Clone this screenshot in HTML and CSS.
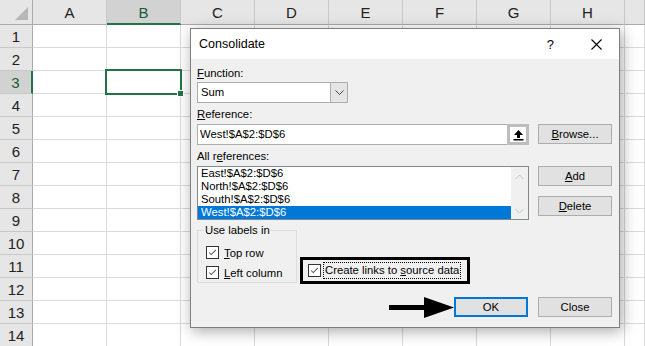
FILE: index.html
```html
<!DOCTYPE html>
<html lang="en">
<head>
  <meta charset="UTF-8">
  <title>Consolidate</title>
  <link rel="stylesheet" href="styles.css">
</head>
<body>
  <div class="sheet" id="sheet">
    <!-- grid cells are generated below -->
  </div>

  <div class="dialog">
    <div class="title-bar">
      <span class="title">Consolidate</span>
      <span class="help">?</span>
      <svg class="close-x" width="11" height="11" viewBox="0 0 11 11">
        <path d="M0.5 0.5 L10.5 10.5 M10.5 0.5 L0.5 10.5" stroke="#000" stroke-width="1.1" fill="none"/>
      </svg>
    </div>

    <div class="dlg-body">
      <div class="label first"><u>F</u>unction:</div>
      <div class="combo">
        <span class="combo-text">Sum</span>
        <span class="combo-btn">
          <svg width="9" height="6" viewBox="0 0 9 6"><path d="M0.5 0.5 L4.5 4.5 L8.5 0.5" stroke="#444" fill="none"/></svg>
        </span>
      </div>

      <div class="label"><u>R</u>eference:</div>
      <div class="row">
        <div class="ref-field">
          <div class="ref-input">West!$A$2:$D$6</div>
          <div class="collapse-btn">
            <svg width="11" height="12" viewBox="0 0 11 12">
              <path d="M5.5 1 L1 6 L4 6 L4 9 L7 9 L7 6 L10 6 Z" fill="#000"/>
              <rect x="0.5" y="10" width="10" height="1.5" fill="#000"/>
            </svg>
          </div>
        </div>
        <div class="btn"><u>B</u>rowse...</div>
      </div>

      <div class="label">All r<u>e</u>ferences:</div>
      <div class="row">
        <div class="listbox">
          <div class="items">
            <div class="item">East!$A$2:$D$6</div>
            <div class="item">North!$A$2:$D$6</div>
            <div class="item">South!$A$2:$D$6</div>
            <div class="item selected">West!$A$2:$D$6</div>
          </div>
          <div class="scrollbar">
            <svg width="9" height="6" viewBox="0 0 9 6"><path d="M0.5 5 L4.5 1 L8.5 5" stroke="#c2c2c2" fill="none"/></svg>
            <svg width="9" height="6" viewBox="0 0 9 6"><path d="M0.5 1 L4.5 5 L8.5 1" stroke="#c2c2c2" fill="none"/></svg>
          </div>
        </div>
        <div class="btn-col">
          <div class="btn"><u>A</u>dd</div>
          <div class="btn"><u>D</u>elete</div>
        </div>
      </div>

      <div class="options">
        <fieldset class="group">
          <legend>Use labels in</legend>
          <div class="check-line">
            <svg class="box" width="13" height="13" viewBox="0 0 13 13"><path d="M2.5 6.5 L5 9 L10.5 3.5" stroke="#555" stroke-width="1.2" fill="none"/></svg>
            <span><u>T</u>op row</span>
          </div>
          <div class="check-line">
            <svg class="box" width="13" height="13" viewBox="0 0 13 13"><path d="M2.5 6.5 L5 9 L10.5 3.5" stroke="#555" stroke-width="1.2" fill="none"/></svg>
            <span><u>L</u>eft column</span>
          </div>
        </fieldset>
        <div class="highlight">
          <svg class="box" width="13" height="13" viewBox="0 0 13 13"><path d="M2.5 6.5 L5 9 L10.5 3.5" stroke="#555" stroke-width="1.2" fill="none"/></svg>
          <span class="focus">Create links to <u>s</u>ource data</span>
        </div>
      </div>

      <div class="actions">
        <div class="btn default">OK</div>
        <div class="btn">Close</div>
      </div>
    </div>
  </div>

  <svg class="pointer" width="66" height="22" viewBox="0 0 66 22">
    <rect x="0" y="8" width="38" height="5" fill="#000"/>
    <path d="M35 0 L65 10.5 L35 21 Z" fill="#000"/>
  </svg>

  <script>
    const sheet = document.getElementById("sheet");
    const cols = ["A", "B", "C", "D", "E", "F", "G", "H", ""];
    let html = '<div class="corner"></div>';
    cols.forEach(c => {
      html += `<div class="col-head ${c === "B" ? "active" : ""}">${c}</div>`;
    });
    for (let r = 1; r <= 14; r++) {
      html += `<div class="row-head ${r === 3 ? "active" : ""}">${r}</div>`;
      cols.forEach(c => {
        const sel = (r === 3 && c === "B") ? "selected" : "";
        html += `<div class="cell ${sel}"></div>`;
      });
    }
    sheet.innerHTML = html;
  </script>
</body>
</html>
```

FILE: styles.css
```css
body {
  margin: 0;
  width: 645px;
  height: 346px;
  overflow: hidden;
  background-color: #fff;
  position: relative;
}

/* spreadsheet */
.sheet {
  display: grid;
  grid-template-columns: 33px repeat(8, 74px) 20px;
  grid-template-rows: 25px;
  grid-auto-rows: 23px;
  font-family: "Liberation Sans", Arial, sans-serif;
  font-size: 15px;
  color: #222;
}

.corner,
.col-head,
.row-head {
  background-color: #e6e6e6;
  box-sizing: border-box;
  display: flex;
  align-items: center;
  justify-content: center;
}

.corner {
  position: relative;
  border-right: 1px solid #ababab;
  border-bottom: 1px solid #ababab;
}

.corner::after {
  content: "";
  position: absolute;
  right: 4px;
  bottom: 4px;
  border-left: 13px solid transparent;
  border-bottom: 13px solid #b7b7b7;
}

.col-head {
  border-right: 1px solid #c8c8c8;
  border-bottom: 1px solid #ababab;
  padding-top: 1px;
}

.col-head.active {
  background-color: #d2d2d2;
  color: #185c37;
  border-bottom: 2px solid #217346;
}

.row-head {
  border-right: 1px solid #ababab;
  border-bottom: 1px solid #c8c8c8;
}

.row-head.active {
  background-color: #d2d2d2;
  color: #185c37;
  border-right: 2px solid #217346;
}

.cell {
  box-sizing: border-box;
  border-right: 1px solid #dadada;
  border-bottom: 1px solid #dadada;
}

.cell.selected {
  position: relative;
}

.cell.selected::before {
  content: "";
  position: absolute;
  left: -2px;
  top: -2px;
  right: -2px;
  bottom: -2px;
  border: 2px solid #217346;
  z-index: 1;
}

.cell.selected::after {
  content: "";
  position: absolute;
  right: -4px;
  bottom: -4px;
  width: 5px;
  height: 5px;
  background-color: #217346;
  border: 1px solid #fff;
  z-index: 2;
}

/* dialog */
.dialog {
  position: absolute;
  left: 190px;
  top: 28px;
  width: 430px;
  height: 300px;
  box-sizing: border-box;
  border: 1px solid #7f7f7f;
  background-color: #f0f0f0;
  box-shadow: 2px 3px 14px rgba(0, 0, 0, 0.35);
  font-family: "Liberation Sans", Arial, sans-serif;
  font-size: 11.3px;
  color: #000;
  z-index: 5;
}

.title-bar {
  height: 30px;
  background-color: #fff;
  display: flex;
  align-items: center;
  padding: 0 17px 0 8px;
}

.title {
  font-size: 12.5px;
  flex: 1;
}

.help {
  font-size: 13px;
  margin-right: 37px;
}

.dlg-body {
  padding: 0 7px 0 6px;
}

.label {
  height: 14px;
  line-height: 14px;
  margin-top: 4px;
  margin-bottom: 3px;
}

.label.first {
  margin-top: 7px;
  margin-bottom: 2px;
}

.combo {
  width: 151px;
  height: 21px;
  box-sizing: border-box;
  border: 1px solid #adadad;
  background-color: #fff;
  display: flex;
}

.combo-text {
  flex: 1;
  line-height: 19px;
  padding-left: 3px;
}

.combo-btn {
  width: 16px;
  background-color: #e5e5e5;
  border-left: 1px solid #adadad;
  display: flex;
  align-items: center;
  justify-content: center;
}

.row {
  display: flex;
  gap: 9px;
  align-items: flex-start;
}

.ref-field {
  width: 332px;
  height: 21px;
  display: flex;
}

.ref-input {
  flex: 1;
  box-sizing: border-box;
  border: 1px solid #adadad;
  border-right: none;
  background-color: #fff;
  line-height: 19px;
  padding-left: 2px;
}

.collapse-btn {
  width: 22px;
  box-sizing: border-box;
  border: 3px solid #bdbdbd;
  background-color: #fff;
  display: flex;
  align-items: center;
  justify-content: center;
}

.btn {
  width: 74px;
  height: 20px;
  box-sizing: border-box;
  border: 1px solid #adadad;
  background-color: #e1e1e1;
  text-align: center;
  line-height: 18px;
}

.btn.default {
  border: 2px solid #0078d7;
  line-height: 16px;
}

.listbox {
  width: 332px;
  height: 54px;
  box-sizing: border-box;
  border: 1px solid #828790;
  background-color: #fff;
  display: flex;
}

.items {
  flex: 1;
}

.item {
  height: 13px;
  line-height: 13px;
  padding-left: 3px;
}

.item.selected {
  background-color: #0078d7;
  color: #fff;
}

.scrollbar {
  width: 17px;
  background-color: #f0f0f0;
  display: flex;
  flex-direction: column;
  justify-content: space-between;
  align-items: center;
  padding: 7px 0 5px;
  box-sizing: border-box;
}

.btn-col {
  display: flex;
  flex-direction: column;
  gap: 10px;
}

.options {
  display: flex;
  align-items: flex-end;
  gap: 3px;
  margin-top: 4px;
}

.group {
  width: 100px;
  height: 59px;
  box-sizing: border-box;
  margin: 0;
  border: 1px solid #dcdcdc;
  padding: 9px 0 0 8px;
}

.group legend {
  padding: 0 1px;
  margin-left: -2px;
  line-height: 13px;
}

.check-line {
  display: flex;
  align-items: center;
  gap: 5px;
  height: 13px;
  margin-bottom: 7px;
}

.check-line:last-child {
  margin-bottom: 0;
}

.box {
  width: 13px;
  height: 13px;
  box-sizing: border-box;
  border: 1px solid #333;
  background-color: #fff;
  flex: none;
}

.highlight {
  width: 170px;
  height: 27px;
  box-sizing: border-box;
  border: 3px solid #000;
  display: flex;
  align-items: center;
  padding-left: 5px;
  gap: 3px;
  margin-bottom: -1px;
}

.focus {
  outline: 1px dotted #000;
  padding: 0 1px;
  line-height: 15px;
}

.actions {
  display: flex;
  justify-content: flex-end;
  gap: 10px;
  margin-top: 14px;
}

.pointer {
  position: absolute;
  left: 389px;
  top: 297px;
  z-index: 6;
}
```
